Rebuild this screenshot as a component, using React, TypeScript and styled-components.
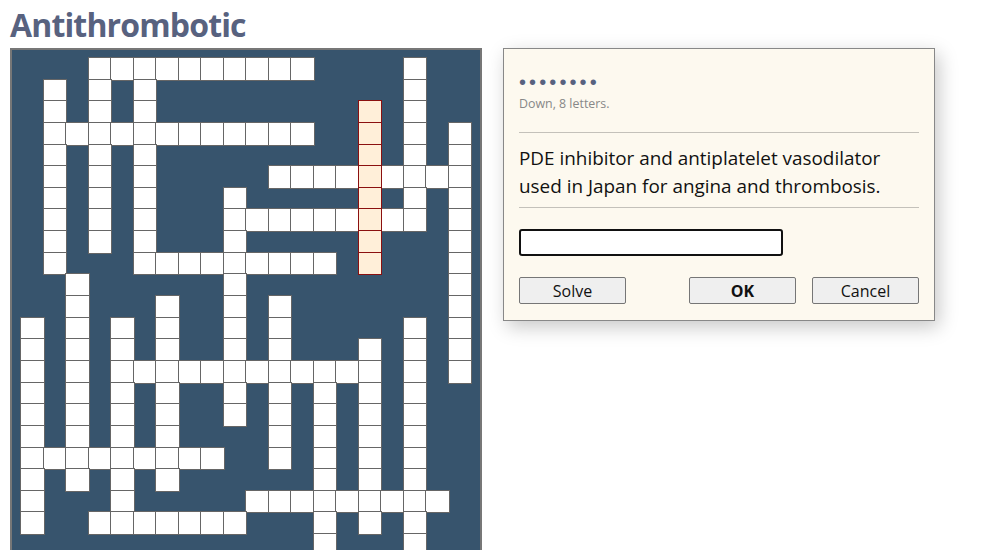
import React from 'react';
import styled, { createGlobalStyle } from 'styled-components';

// '-' block, 'o' open cell, 'h' cell of the selected word
const rows = [
  '---oooooooooo----o--',
  '-o-o-o-----------o--',
  '-o-o-o---------h-o--',
  '-oooooooooooo--h-o-o',
  '-o-o-o---------h-o-o',
  '-o-o-o-----oooohoooo',
  '-o-o-o---o-----h-o-o',
  '-o-o-o---oooooohoo-o',
  '-o-o-o---o-----h---o',
  '-o---ooooooooo-h---o',
  '--o------o---------o',
  '--o---o--o-o-------o',
  'o-o-o-o--o-o-----o-o',
  'o-o-o-o--o-o---o-o-o',
  'o-o-oooooooooooo-o-o',
  'o-o-o-o--o-o-o-o-o--',
  'o-o-o-o--o-o-o-o-o--',
  'o-o-o-o----o-o-o-o--',
  'ooooooooo--o-o-o-o--',
  'o-o-o-o------o-o-o--',
  'o---o-----ooooooooo-',
  'o--ooooooo---o-o-o--',
  '-------------o---o--',
  '-------------o---o--',
];

const GlobalStyle = createGlobalStyle`
  html, body {
    margin: 0;
    overflow: hidden;
    background: #fff;
  }
  body {
    font-family: "Open Sans", "Noto Sans", sans-serif;
  }
`;

const Page = styled.div`
  padding: 0 10px;
`;

const Title = styled.h1`
  margin: 0 0 3px;
  padding-top: 5px;
  font-size: 32px;
  line-height: 40px;
  font-weight: 700;
  letter-spacing: -0.85px;
  color: #58627f;
`;

const Main = styled.div`
  display: flex;
  align-items: flex-start;
  gap: 21px;
`;

const Board = styled.div`
  display: grid;
  grid-template-columns: repeat(20, 22.5px);
  grid-auto-rows: 21.65px;
  padding: 8px 9px;
  background: #37546d;
  border: 2px solid #777;
`;

const Cell = styled.div<{ $kind: string }>`
  background: ${({ $kind }) => ($kind === 'h' ? '#ffefd9' : $kind === 'o' ? '#fff' : 'transparent')};
  box-shadow: ${({ $kind }) =>
    $kind === 'h' ? '0 0 0 1px #8b1010' : $kind === 'o' ? '0 0 0 1px #666' : 'none'};
  position: ${({ $kind }) => ($kind === 'h' ? 'relative' : 'static')};
  z-index: ${({ $kind }) => ($kind === 'h' ? 1 : 'auto')};
`;

const Panel = styled.div`
  width: 400px;
  padding: 15px 15px 16px;
  background: #fdf9ef;
  border: 1px solid #888;
  box-shadow: 4px 6px 18px rgba(0, 0, 0, 0.22);
  font-family: "Open Sans", "Noto Sans", sans-serif;
`;

const Dots = styled.div`
  margin-top: 8px;
  height: 20px;
  line-height: 20px;
  font-family: "Liberation Sans", sans-serif;
  font-size: 20px;
  letter-spacing: 3.1px;
  color: #58627f;
`;

const Hint = styled.div`
  margin-top: 4px;
  font-size: 12.4px;
  line-height: 16px;
  color: #888;
`;

const Rule = styled.hr<{ $top: number }>`
  margin: ${({ $top }) => $top}px 0 0;
  border: 0;
  border-top: 1px solid #c4c1ba;
`;

const Clue = styled.p`
  margin: 11px 0 0;
  font-size: 18.9px;
  line-height: 28px;
  color: #111;
`;

const Answer = styled.input`
  display: block;
  box-sizing: border-box;
  margin-top: 21px;
  width: 264px;
  height: 27px;
  border: 2px solid #111;
  border-radius: 3px;
  background: #fff;
  outline: none;
`;

const Actions = styled.div`
  display: flex;
  gap: 16px;
  margin-top: 21px;
`;

const Button = styled.button<{ $strong?: boolean; $push?: boolean }>`
  box-sizing: border-box;
  width: 107px;
  height: 27px;
  margin-left: ${({ $push }) => ($push ? 'auto' : '0')};
  padding: 0;
  border: 1px solid #767676;
  border-radius: 2px;
  background: #efefef;
  font-family: "Open Sans", "Noto Sans", sans-serif;
  font-size: 16px;
  font-weight: ${({ $strong }) => ($strong ? 700 : 400)};
  color: #111;
`;

export default function App() {
  return (
    <Page>
      <GlobalStyle />
      <Title>Antithrombotic</Title>
      <Main>
        <Board>
          {rows.map((row, r) =>
            row.split('').map((kind, c) => <Cell key={`${r}-${c}`} $kind={kind} />)
          )}
        </Board>
        <Panel>
          <Dots>••••••••</Dots>
          <Hint>Down, 8 letters.</Hint>
          <Rule $top={20} />
          <Clue>
            PDE inhibitor and antiplatelet vasodilator
            <br />
            used in Japan for angina and thrombosis.
          </Clue>
          <Rule $top={7} />
          <Answer type="text" />
          <Actions>
            <Button>Solve</Button>
            <Button $strong $push>
              OK
            </Button>
            <Button>Cancel</Button>
          </Actions>
        </Panel>
      </Main>
    </Page>
  );
}
